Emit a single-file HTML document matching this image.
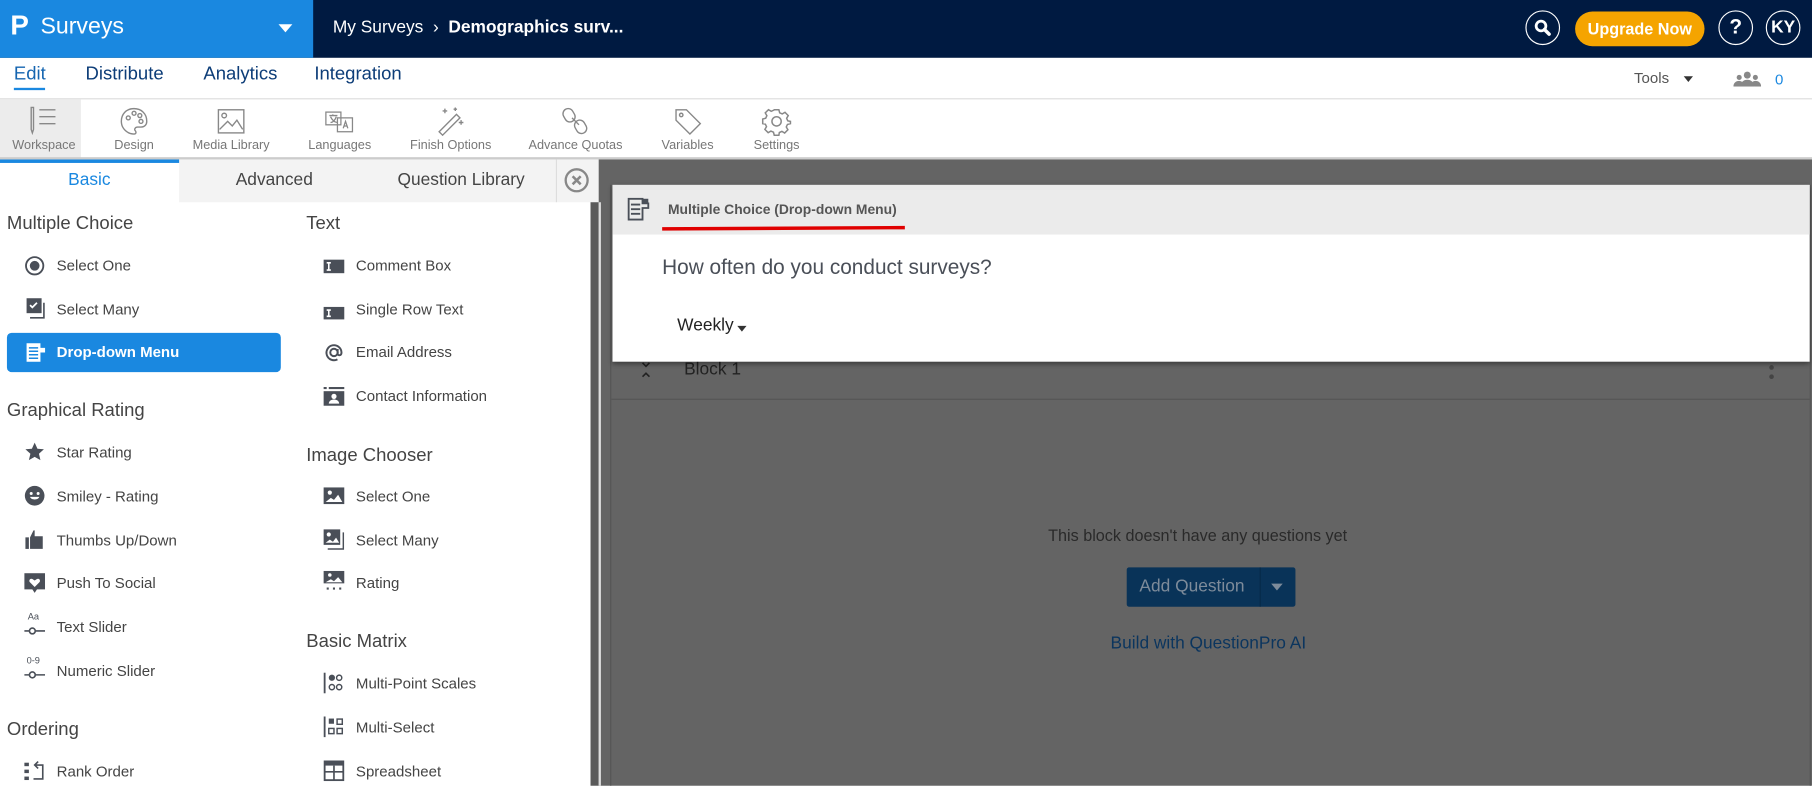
<!DOCTYPE html>
<html><head><meta charset="utf-8"><style>
*{margin:0;padding:0;box-sizing:border-box}
html,body{width:1812px;height:785px;overflow:hidden;background:#fff;font-family:"Liberation Sans",sans-serif}
#w{position:absolute;left:0;top:0;width:1568px;height:680px;transform:scale(1.15561);transform-origin:0 0;overflow:hidden}
.a{position:absolute;white-space:nowrap}
.top{left:0;top:0;width:1568px;height:50px;background:#001a41}
.blue{left:0;top:0;width:271px;height:50px;background:#1a88e0}
.circ{width:30px;height:30px;border:1.5px solid #fff;border-radius:50%;color:#fff;font-weight:bold;text-align:center;line-height:27px;font-size:16px}
.nav{font-size:16px;color:#0d3d78;top:56px}
.tb{font-size:11px;color:#777;top:120px;transform:translateX(-50%)}
.ti{top:92px;transform:translateX(-50%)}
.h{font-size:16px;color:#444}
.it{font-size:13px;color:#444}
.ic{width:18px;height:18px}
</style></head><body><div id="w">
<div class="a top"></div>
<div class="a blue"></div>
<div class="a" style="left:9px;top:9px;color:#fff;font-size:24px;font-weight:bold">P</div>
<div class="a" style="left:35px;top:12px;color:#fff;font-size:20px">Surveys</div>
<div class="a" style="left:241px;top:21px;border-left:6px solid transparent;border-right:6px solid transparent;border-top:7px solid #fff"></div>
<div class="a" style="left:288px;top:15px;color:#fff;font-size:15px">My Surveys &nbsp;›&nbsp; <span style="font-weight:600">Demographics surv...</span></div>
<div class="a circ" style="left:1320px;top:9px"><svg width="16" height="16" viewBox="0 0 16 16" style="margin-top:6px"><circle cx="6.5" cy="6.5" r="4.2" fill="none" stroke="#fff" stroke-width="2.4"/><path d="M9.5 9.5l4 4" stroke="#fff" stroke-width="3" stroke-linecap="round"/></svg></div>
<div class="a" style="left:1363px;top:10px;width:112px;height:30px;border-radius:15px;background:#f5a400;color:#fff;font-size:14px;font-weight:600;text-align:center;line-height:30px">Upgrade Now</div>
<div class="a circ" style="left:1487px;top:9px;font-size:18px">?</div>
<div class="a circ" style="left:1528px;top:9px;font-size:15px">KY</div>

<div class="a nav" style="left:12px;color:#1565b0">Edit</div>
<div class="a" style="left:12px;top:76px;width:27px;height:2px;background:#1a88e0"></div>
<div class="a nav" style="left:74px">Distribute</div>
<div class="a nav" style="left:176px">Analytics</div>
<div class="a nav" style="left:272px">Integration</div>
<div class="a" style="left:1414px;top:60px;font-size:13px;color:#555">Tools</div>
<div class="a" style="left:1457px;top:66px;border-left:4.5px solid transparent;border-right:4.5px solid transparent;border-top:5px solid #333"></div>
<svg class="a" style="left:1500px;top:61px" width="24" height="14" viewBox="0 0 24 14"><circle cx="12" cy="4" r="3" fill="#888"/><circle cx="5" cy="6" r="2.2" fill="#888"/><circle cx="19" cy="6" r="2.2" fill="#888"/><path d="M6 14c0-4 3-6 6-6s6 2 6 6z" fill="#888"/><path d="M0 14c0-3 2-5 5-5 1 0 2 .4 2.5 1L6 14zM24 14c0-3-2-5-5-5-1 0-2 .4-2.5 1L18 14z" fill="#888"/></svg>
<div class="a" style="left:1536px;top:61px;font-size:13px;color:#1a88e0">0</div>
<div class="a" style="left:0;top:85px;width:1568px;height:1px;background:#ddd"></div>

<div class="a" style="left:0;top:86px;width:70px;height:51px;background:#ececec"></div>
<div class="a" style="left:0;top:136px;width:1568px;height:2px;background:#ccc"></div>
<svg class="a ti" style="left:38px" width="26" height="26" viewBox="0 0 26 26" fill="none" stroke="#888" stroke-width="1.2"><path d="M2 1h2v19l-1 3-1-3z"/><path d="M9 3h14M9 9h14M9 15h14"/></svg>
<svg class="a ti" style="left:116px" width="26" height="26" viewBox="0 0 26 26" fill="none" stroke="#888" stroke-width="1.2"><path d="M13 2C6 2 2 7 2 13s5 11 11 11c2 0 2-2 1-3s0-3 2-3h3c3 0 5-2 5-5C24 6 19 2 13 2z"/><circle cx="8" cy="10" r="1.7"/><circle cx="13" cy="6" r="1.7"/><circle cx="18" cy="8" r="1.7"/><circle cx="19" cy="13" r="1.7"/></svg>
<svg class="a ti" style="left:200px" width="26" height="26" viewBox="0 0 26 26" fill="none" stroke="#888" stroke-width="1.2"><rect x="2" y="3" width="22" height="20"/><circle cx="7" cy="8" r="2"/><path d="M3 20l7-7 4 4 4-5 5 8"/></svg>
<svg class="a ti" style="left:294px" width="26" height="26" viewBox="0 0 26 26" fill="none" stroke="#888" stroke-width="1.1"><rect x="1" y="5" width="13" height="11"/><rect x="11" y="10" width="13" height="12"/><path d="M4 8h7M7 7v1M5 9c2 4 4 5 6 5M10 9c-1 3-3 5-5 5M16 19l2-6 2 6M17 17h2"/></svg>
<svg class="a ti" style="left:390px" width="26" height="26" viewBox="0 0 26 26" fill="none" stroke="#888" stroke-width="1.2"><path d="M3 22l15-15 3 3-15 15z"/><path d="M8 2v4M6 4h4M22 12v4M20 14h4M17 1v3M15.5 2.5h3"/></svg>
<svg class="a ti" style="left:498px" width="26" height="26" viewBox="0 0 26 26" fill="none" stroke="#888" stroke-width="1.2"><rect x="3" y="2" width="9" height="12" rx="4.5" transform="rotate(-30 7 8)"/><rect x="13" y="12" width="9" height="12" rx="4.5" transform="rotate(-30 17 18)"/><path d="M10 10l6 6"/></svg>
<svg class="a ti" style="left:595px" width="26" height="26" viewBox="0 0 26 26" fill="none" stroke="#888" stroke-width="1.2"><path d="M3 3h9l12 12-9 9L3 12z"/><circle cx="7.5" cy="7.5" r="1.5"/></svg>
<svg class="a ti" style="left:672px" width="26" height="26" viewBox="0 0 26 26" fill="none" stroke="#888" stroke-width="1.3"><circle cx="13" cy="13" r="4"/><path d="M11 3h4l.7 2.6 2.2 1 2.4-1.4 2.8 2.8-1.4 2.4 1 2.2L25 13v0l0 2-2.6.7-1 2.2 1.4 2.4-2.8 2.8-2.4-1.4-2.2 1L15 25h-4l-.7-2.6-2.2-1-2.4 1.4-2.8-2.8 1.4-2.4-1-2.2L1 15v-4l2.6-.7 1-2.2-1.4-2.4 2.8-2.8 2.4 1.4 2.2-1z"/></svg>
<div class="a tb" style="left:38px">Workspace</div>
<div class="a tb" style="left:116px">Design</div>
<div class="a tb" style="left:200px">Media Library</div>
<div class="a tb" style="left:294px">Languages</div>
<div class="a tb" style="left:390px">Finish Options</div>
<div class="a tb" style="left:498px">Advance Quotas</div>
<div class="a tb" style="left:595px">Variables</div>
<div class="a tb" style="left:672px">Settings</div>

<div class="a" style="left:518px;top:138px;width:1050px;height:542px;background:#646464"></div>
<div class="a" style="left:155px;top:138px;width:363px;height:37px;background:#f3f3f3"></div>
<div class="a" style="left:0;top:138px;width:155px;height:3px;background:#1a88e0"></div>
<div class="a" style="left:481px;top:138px;width:1px;height:37px;background:#ddd"></div>
<div class="a" style="left:59px;top:147px;font-size:15px;color:#1a88e0">Basic</div>
<div class="a" style="left:204px;top:147px;font-size:15px;color:#444">Advanced</div>
<div class="a" style="left:344px;top:147px;font-size:15px;color:#444">Question Library</div>
<svg class="a" style="left:488px;top:145px" width="22" height="22" viewBox="0 0 22 22"><circle cx="11" cy="11" r="9.5" fill="none" stroke="#888" stroke-width="2"/><path d="M7.5 7.5l7 7M14.5 7.5l-7 7" stroke="#888" stroke-width="2.2"/></svg>
<div class="a" style="left:511px;top:175px;width:7px;height:505px;background:#5a5a5a"></div>
<div class="a" style="left:518px;top:175px;width:2px;height:505px;background:#ddd"></div>

<div class="a h" style="left:6px;top:185px">Multiple Choice</div>
<div class="a h" style="left:6px;top:347px">Graphical Rating</div>
<div class="a h" style="left:6px;top:623px">Ordering</div>
<div class="a h" style="left:265px;top:185px">Text</div>
<div class="a h" style="left:265px;top:386px">Image Chooser</div>
<div class="a h" style="left:265px;top:547px">Basic Matrix</div>

<div class="a" style="left:6px;top:288px;width:237px;height:34px;background:#1a88e0;border-radius:4px"></div>

<svg class="a ic" style="left:21px;top:221px" viewBox="0 0 18 18"><circle cx="9" cy="9" r="7.5" fill="none" stroke="#4a4f58" stroke-width="1.6"/><circle cx="9" cy="9" r="4.2" fill="#4a4f58"/></svg>
<div class="a it" style="left:49px;top:222px">Select One</div>
<svg class="a ic" style="left:21px;top:258px" viewBox="0 0 18 18"><rect x="2" y="0" width="13" height="13" fill="#4a4f58"/><path d="M17 4v13H5" fill="none" stroke="#4a4f58" stroke-width="1.4"/><path d="M5 6l2 2 4-4" stroke="#fff" stroke-width="1.5" fill="none"/></svg>
<div class="a it" style="left:49px;top:260px">Select Many</div>
<svg class="a ic" style="left:22px;top:296px" viewBox="0 0 18 18"><path d="M1 1h12v4h4v4h-4v8H1z" fill="#fff"/><path d="M3 5h8M3 8h8M3 11h8M3 14h8" stroke="#1a88e0" stroke-width="1.3"/></svg>
<div class="a it" style="left:49px;top:297px;color:#fff;font-weight:600">Drop-down Menu</div>

<svg class="a ic" style="left:21px;top:382px" viewBox="0 0 18 18"><path d="M9 1l2.4 5.3 5.6.5-4.3 3.8 1.3 5.6L9 13.3l-5 2.9 1.3-5.6L1 6.8l5.6-.5z" fill="#4a4f58"/></svg>
<div class="a it" style="left:49px;top:384px">Star Rating</div>
<svg class="a ic" style="left:21px;top:420px" viewBox="0 0 18 18"><circle cx="9" cy="9" r="8.5" fill="#4a4f58"/><circle cx="6" cy="7" r="1.3" fill="#fff"/><circle cx="12" cy="7" r="1.3" fill="#fff"/><path d="M5 10h8c-1 3-7 3-8 0z" fill="#fff"/></svg>
<div class="a it" style="left:49px;top:422px">Smiley - Rating</div>
<svg class="a ic" style="left:21px;top:458px" viewBox="0 0 18 18"><rect x="1" y="7" width="3" height="10" fill="#4a4f58"/><path d="M5 7l3-6h1v5h7v11H5z" fill="#4a4f58"/></svg>
<div class="a it" style="left:49px;top:460px">Thumbs Up/Down</div>
<svg class="a ic" style="left:21px;top:496px" viewBox="0 0 18 18"><path d="M0 0h18v14h-7l-2 3-2-3H0z" fill="#4a4f58"/><path d="M9 12L5 8c-1.5-1.5 0-4 2-3l2 1.3L11 5c2-1 3.5 1.5 2 3z" fill="#fff"/></svg>
<div class="a it" style="left:49px;top:497px">Push To Social</div>
<div class="a" style="left:24px;top:529px;font-size:8px;color:#4a4f58">Aa</div>
<svg class="a ic" style="left:21px;top:537px" viewBox="0 0 18 10"><path d="M0 5h18" stroke="#4a4f58" stroke-width="1.4"/><circle cx="7" cy="5" r="2.5" fill="#fff" stroke="#4a4f58" stroke-width="1.4"/></svg>
<div class="a it" style="left:49px;top:535px">Text Slider</div>
<div class="a" style="left:23px;top:567px;font-size:8px;color:#4a4f58">0-9</div>
<svg class="a ic" style="left:21px;top:575px" viewBox="0 0 18 10"><path d="M0 5h18" stroke="#4a4f58" stroke-width="1.4"/><circle cx="7" cy="5" r="2.5" fill="#fff" stroke="#4a4f58" stroke-width="1.4"/></svg>
<div class="a it" style="left:49px;top:573px">Numeric Slider</div>
<svg class="a ic" style="left:21px;top:658px" viewBox="0 0 18 18"><rect x="0" y="2" width="4" height="3" fill="#4a4f58"/><rect x="0" y="8" width="4" height="3" fill="#4a4f58"/><rect x="0" y="14" width="4" height="3" fill="#4a4f58"/><path d="M8 16h8V4h-6M12 1L9 4l3 3" fill="none" stroke="#4a4f58" stroke-width="1.4"/></svg>
<div class="a it" style="left:49px;top:660px">Rank Order</div>

<svg class="a ic" style="left:280px;top:222px" viewBox="0 0 20 14"><rect width="20" height="13" fill="#4a4f58"/><path d="M3 3h4M3 10h4M5 3v7" stroke="#fff" stroke-width="1.5"/></svg>
<div class="a it" style="left:308px;top:222px">Comment Box</div>
<svg class="a ic" style="left:280px;top:262px" viewBox="0 0 20 12"><rect width="20" height="12" fill="#4a4f58"/><path d="M3 3h4M3 9h4M5 3v6" stroke="#fff" stroke-width="1.5"/></svg>
<div class="a it" style="left:308px;top:260px">Single Row Text</div>
<svg class="a ic" style="left:280px;top:296px" viewBox="0 0 18 18"><circle cx="9" cy="9" r="3.2" fill="none" stroke="#4a4f58" stroke-width="1.7"/><path d="M12.2 6v4c0 2 3.3 2 3.3-1A6.5 6.5 0 1 0 12 15" fill="none" stroke="#4a4f58" stroke-width="1.7"/></svg>
<div class="a it" style="left:308px;top:297px">Email Address</div>
<svg class="a ic" style="left:280px;top:334px" viewBox="0 0 20 18"><rect x="0" y="0" width="3" height="2" fill="#4a4f58"/><rect x="5" y="0" width="15" height="2" fill="#4a4f58"/><rect x="0" y="4" width="20" height="14" fill="#4a4f58"/><circle cx="10" cy="9" r="2.5" fill="#fff"/><path d="M5 16c0-3 3-4 5-4s5 1 5 4z" fill="#fff"/></svg>
<div class="a it" style="left:308px;top:335px">Contact Information</div>

<svg class="a ic" style="left:280px;top:420px" viewBox="0 0 20 16"><rect width="20" height="16" fill="#4a4f58"/><circle cx="6" cy="5" r="2" fill="#fff"/><path d="M2 14l5-4 3 2 4-5 4 7z" fill="#fff"/></svg>
<div class="a it" style="left:308px;top:422px">Select One</div>
<svg class="a ic" style="left:280px;top:458px" viewBox="0 0 20 20"><rect width="16" height="15" fill="#4a4f58"/><circle cx="5" cy="5" r="2" fill="#fff"/><path d="M2 13l4-3 3 2 3-4 3 5z" fill="#fff"/><path d="M19 3v16H4" fill="none" stroke="#4a4f58" stroke-width="1.4"/></svg>
<div class="a it" style="left:308px;top:460px">Select Many</div>
<svg class="a ic" style="left:280px;top:494px" viewBox="0 0 20 20"><rect width="20" height="12" fill="#4a4f58"/><circle cx="6" cy="4" r="1.7" fill="#fff"/><path d="M2 11l5-3 3 2 4-4 4 5z" fill="#fff"/><path d="M3 17h2M9 17h2M15 17h2" stroke="#4a4f58" stroke-width="2"/></svg>
<div class="a it" style="left:308px;top:497px">Rating</div>

<svg class="a ic" style="left:280px;top:582px" viewBox="0 0 20 20"><path d="M1 0v20" stroke="#4a4f58" stroke-width="1.8"/><circle cx="8" cy="5" r="3" fill="#4a4f58"/><circle cx="15" cy="5" r="2.5" fill="none" stroke="#4a4f58" stroke-width="1.4"/><circle cx="8" cy="14" r="2.5" fill="none" stroke="#4a4f58" stroke-width="1.4"/><circle cx="15" cy="14" r="2.5" fill="none" stroke="#4a4f58" stroke-width="1.4"/></svg>
<div class="a it" style="left:308px;top:584px">Multi-Point Scales</div>
<svg class="a ic" style="left:280px;top:620px" viewBox="0 0 20 20"><path d="M1 0v20" stroke="#4a4f58" stroke-width="1.8"/><rect x="5" y="2" width="5" height="5" fill="#4a4f58"/><rect x="13" y="2.5" width="5" height="5" fill="none" stroke="#4a4f58" stroke-width="1.4"/><rect x="5" y="11.5" width="5" height="5" fill="none" stroke="#4a4f58" stroke-width="1.4"/><rect x="13" y="11.5" width="5" height="5" fill="none" stroke="#4a4f58" stroke-width="1.4"/></svg>
<div class="a it" style="left:308px;top:622px">Multi-Select</div>
<svg class="a ic" style="left:280px;top:658px" viewBox="0 0 20 20"><rect x="1" y="1" width="18" height="18" fill="none" stroke="#4a4f58" stroke-width="1.8"/><rect x="1" y="1" width="18" height="4" fill="#4a4f58"/><path d="M1 11h18M10 5v14" stroke="#4a4f58" stroke-width="1.6"/></svg>
<div class="a it" style="left:308px;top:660px">Spreadsheet</div>

<div class="a" style="left:528px;top:160px;width:1px;height:520px;background:#555"></div>
<div class="a" style="left:1566px;top:160px;width:1px;height:520px;background:#555"></div>
<div class="a" style="left:529px;top:345px;width:1037px;height:1px;background:#555"></div>
<svg class="a" style="left:554px;top:312px" width="10" height="16" viewBox="0 0 10 16"><path d="M2 2l3 3 3-3M2 14l3-3 3 3" fill="none" stroke="#222" stroke-width="1.4"/></svg>
<div class="a" style="left:592px;top:311px;font-size:15px;color:#222">Block 1</div>
<div class="a" style="left:1531px;top:316px;width:4px;height:4px;border-radius:2px;background:#444;box-shadow:0 8px 0 #444"></div>
<div class="a" style="left:907px;top:455px;font-size:14px;color:#2a2a2a">This block doesn't have any questions yet</div>
<div class="a" style="left:975px;top:491px;width:146px;height:34px;background:#093358;border-radius:2px"></div>
<div class="a" style="left:1090px;top:491px;width:1px;height:34px;background:#062a48"></div>
<div class="a" style="left:986px;top:499px;font-size:15px;color:#7d8b9a">Add Question</div>
<div class="a" style="left:1100px;top:505px;border-left:5px solid transparent;border-right:5px solid transparent;border-top:6px solid #7d8b9a"></div>
<div class="a" style="left:961px;top:548px;font-size:15px;color:#0b355e">Build with QuestionPro AI</div>

<div class="a" style="left:530px;top:160px;width:1036px;height:153px;background:#fff;box-shadow:0 2px 4px rgba(0,0,0,.4)"></div>
<div class="a" style="left:530px;top:160px;width:1036px;height:43px;background:#ebebeb"></div>
<svg class="a" style="left:543px;top:171px" width="20" height="20" viewBox="0 0 20 20"><path d="M1 1h12v4h5v4h-5v10H1z" fill="none" stroke="#4a4f58" stroke-width="1.6"/><path d="M3 6h8M3 10h8M3 14h8" stroke="#4a4f58" stroke-width="1.6"/><rect x="13" y="1" width="5" height="4" fill="#4a4f58"/></svg>
<div class="a" style="left:578px;top:174px;font-size:12px;font-weight:bold;color:#555">Multiple Choice (Drop-down Menu)</div>
<div class="a" style="left:573px;top:196px;width:210px;height:3px;background:#e00000;transform:rotate(-.3deg)"></div>
<div class="a" style="left:573px;top:221px;font-size:18px;color:#4a4f58">How often do you conduct surveys?</div>
<div class="a" style="left:586px;top:273px;font-size:15px;color:#222">Weekly</div>
<div class="a" style="left:638px;top:282px;border-left:4px solid transparent;border-right:4px solid transparent;border-top:5px solid #333"></div>
</div></body></html>
